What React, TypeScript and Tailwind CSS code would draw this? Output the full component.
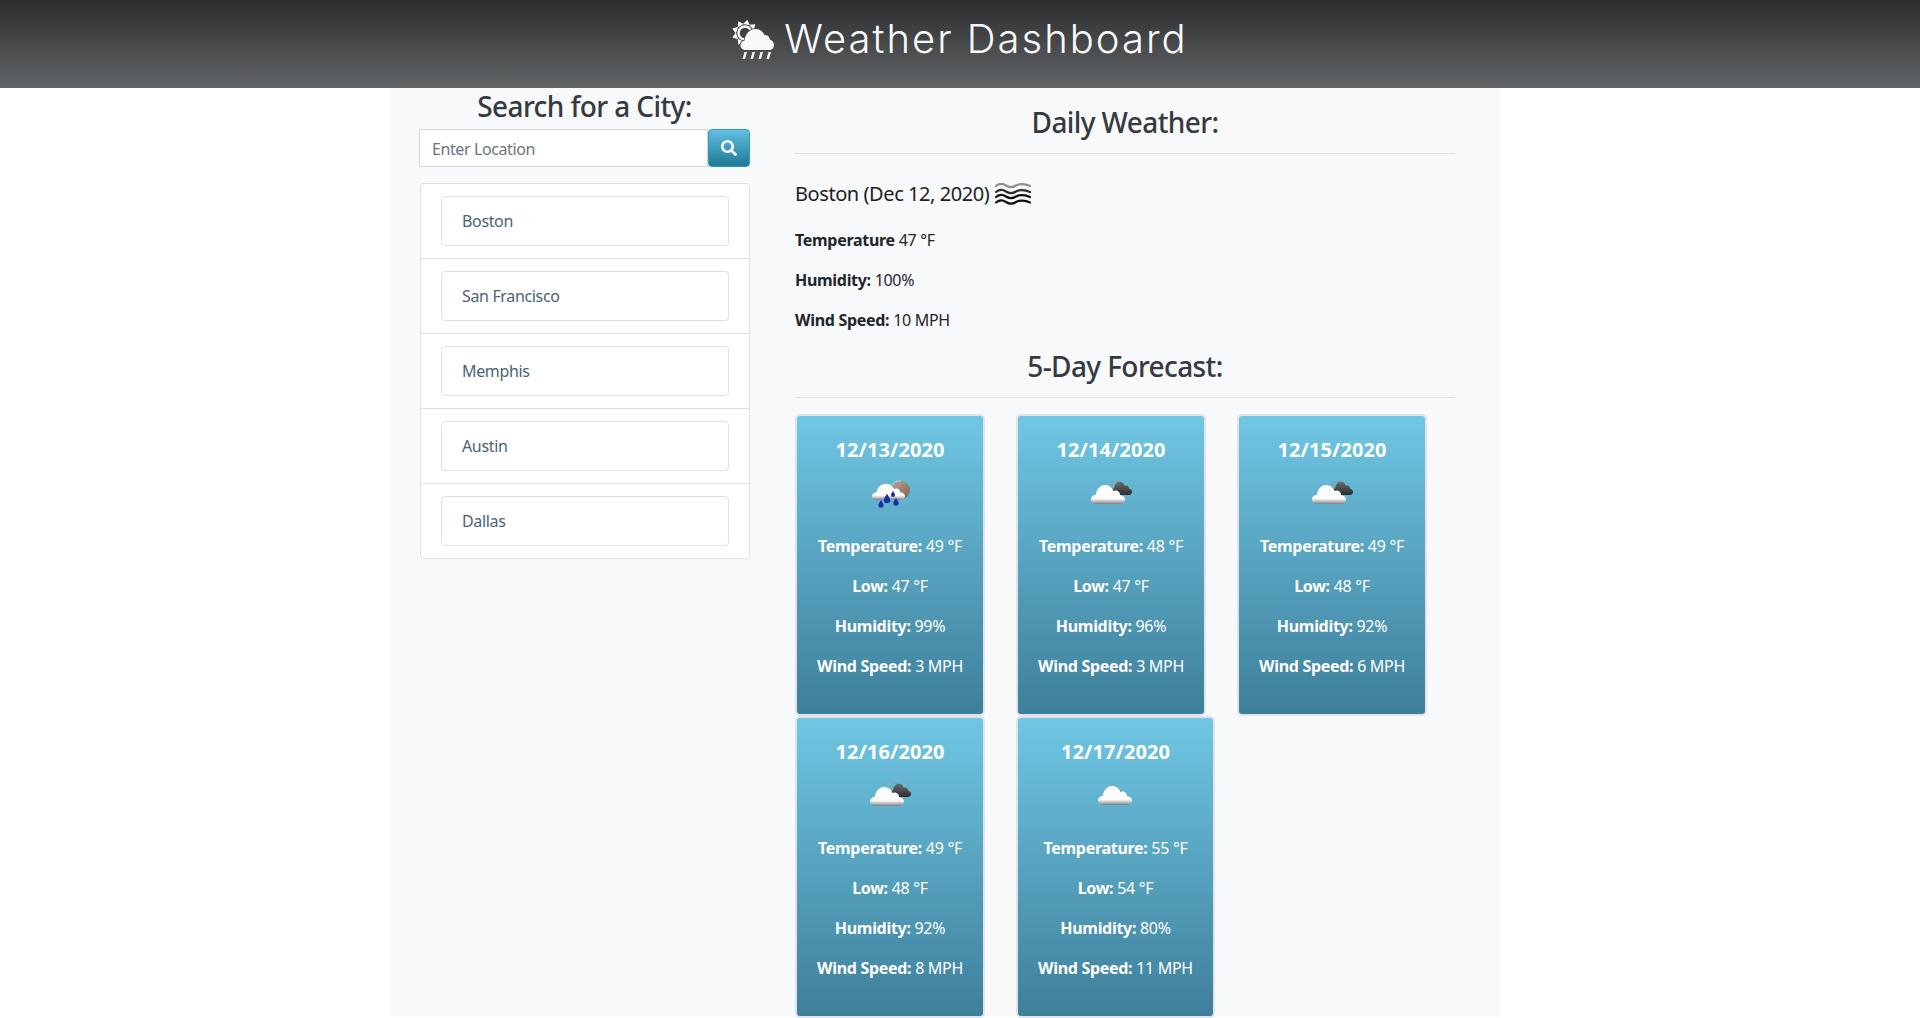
import { FaSearch } from 'react-icons/fa';

const cities = ['Boston', 'San Francisco', 'Memphis', 'Austin', 'Dallas'];

type IconKind = 'rain' | 'broken' | 'cloud';

const forecast: { date: string; icon: IconKind; temp: number; low: number; humidity: number; wind: number; width: string }[] = [
  { date: '12/13/2020', icon: 'rain', temp: 49, low: 47, humidity: 99, wind: 3, width: 'w-[190px]' },
  { date: '12/14/2020', icon: 'broken', temp: 48, low: 47, humidity: 96, wind: 3, width: 'w-[190px]' },
  { date: '12/15/2020', icon: 'broken', temp: 49, low: 48, humidity: 92, wind: 6, width: 'w-[190px]' },
  { date: '12/16/2020', icon: 'broken', temp: 49, low: 48, humidity: 92, wind: 8, width: 'w-[190px]' },
  { date: '12/17/2020', icon: 'cloud', temp: 55, low: 54, humidity: 80, wind: 11, width: 'w-[199px]' }
];

const CLOUD = 'M5 20C2 20 0 18 0 15.5C0 12.8 2 11 4.8 10.8C5.6 5.5 9.2 1 14 1C18 1 21 3.2 22.6 7C24.4 6 26.6 6.2 28 8C28.8 9 29 10 29 11C31.8 11.2 34 13 34 15.5C34 18 32 20 29 20Z';

function WeatherIcon({ kind, id }: { kind: IconKind; id: string }) {
  return (
    <svg viewBox="0 0 50 50" className="block w-[50px] h-[50px] mx-auto">
      <defs>
        <linearGradient id={`w${id}`} x1="0" y1="0" x2="0" y2="1">
          <stop offset="0" stopColor="#ffffff" />
          <stop offset="0.72" stopColor="#fafafa" />
          <stop offset="0.88" stopColor="#b5b5b5" />
          <stop offset="1" stopColor="#77808a" />
        </linearGradient>
        <linearGradient id={`d${id}`} x1="0" y1="0" x2="0" y2="1">
          <stop offset="0" stopColor="#6b6b6b" />
          <stop offset="1" stopColor="#2d2d2d" />
        </linearGradient>
        <linearGradient id={`s${id}`} x1="0" y1="0" x2="1" y2="1">
          <stop offset="0" stopColor="#b9a391" />
          <stop offset="1" stopColor="#7d6450" />
        </linearGradient>
      </defs>
      {kind === 'rain' && (
        <>
          <circle cx="36" cy="19" r="9" fill={`url(#s${id})`} />
          <path d="M27 14a9 9 0 0 1 9-4" fill="none" stroke="#d9cfc5" strokeWidth="1" />
          <g transform="translate(7 12) scale(0.97 0.85)">
            <path d={CLOUD} fill={`url(#w${id})`} />
          </g>
          {[
            [16, 34, 2.6],
            [22, 29, 3.3],
            [28, 24, 2.1],
            [31, 32, 2.7]
          ].map(([x, y, r]) => (
            <path
              key={`${x}`}
              d={`M${x} ${y - r * 1.9}C${x + r * 0.5} ${y - r} ${x + r} ${y - r * 0.4} ${x + r} ${y}A${r} ${r} 0 0 1 ${x - r} ${y}C${x - r} ${y - r * 0.4} ${x - r * 0.5} ${y - r} ${x} ${y - r * 1.9}Z`}
              fill="#1c2fa8"
            />
          ))}
        </>
      )}
      {kind === 'broken' && (
        <>
          <circle cx="30" cy="15" r="5" fill="none" stroke="#8e979c" strokeWidth="1" />
          <g transform="translate(25 10) scale(0.62 0.7)">
            <path d={CLOUD} fill={`url(#d${id})`} />
          </g>
          <g transform="translate(5 13)">
            <path d={CLOUD} fill={`url(#w${id})`} />
          </g>
        </>
      )}
      {kind === 'cloud' && (
        <g transform="translate(7 12)">
          <path d={CLOUD} fill={`url(#w${id})`} />
        </g>
      )}
    </svg>
  );
}

function HeaderIcon() {
  const spikes = [-150, -110, -70, -30, 10, 50, 170];
  return (
    <svg viewBox="0 0 42 40" className="w-[42px] h-[40px] shrink-0">
      {spikes.map((a) => (
        <polygon key={a} points="-3.500,-8.500 3.500,-8.500 0,-13.500" fill="#f8f9fa" transform={`translate(13 14) rotate(${a})`} />
      ))}
      <circle cx="13" cy="14" r="6.500" fill="none" stroke="#f8f9fa" strokeWidth="2.500" />
      <path
        d="M13.500 31C10 31 8.500 28.500 8.500 26.500C8.500 24 10 22 12.500 21.500C13 16 17 10 23.500 10C28 10 31 12.500 32.500 16C35 15.500 37.500 17.500 38 20.500C40.500 21.500 42 23.500 42 26C42 29 40 31 37 31Z"
        fill="#f8f9fa"
        stroke="#44474a"
        strokeWidth="1.500"
        paintOrder="stroke"
      />
      <g fill="#f8f9fa">
        <polygon points="12.500,33 15,33 13,40 10.500,40" />
        <polygon points="20.500,33 23,33 21,40 18.500,40" />
        <polygon points="28.500,33 31,33 29,40 26.500,40" />
        <polygon points="36.500,33 39,33 37,40 34.500,40" />
      </g>
    </svg>
  );
}

function MistIcon() {
  const wave = 'M1 0C4 -2.500 8 -2.500 11 -0.500C14 1.500 18 1.500 21 -0.500C24 -2.500 30 -2.500 35 0';
  return (
    <svg viewBox="0 0 36 22" className="w-[36px] h-[22px]">
      <g fill="none" strokeWidth="2.200" strokeLinecap="round">
        <path d={wave} transform="translate(0 3)" stroke="#8f8f8f" />
        <path d={wave} transform="translate(0 9)" stroke="#2e2e2e" />
        <path d={wave} transform="translate(0 14)" stroke="#111111" />
        <path d={wave} transform="translate(0 19.500)" stroke="#111111" />
      </g>
    </svg>
  );
}

export default function App() {
  return (
    <div className="min-h-[1018px] bg-white font-['Noto_Sans',sans-serif] text-[#212529]">
      <header className="h-[88px] pb-[10px] flex items-center justify-center gap-[10px] bg-gradient-to-b from-[#2c2d2f] to-[#636668] text-[#f8f9fa]">
        <HeaderIcon />
        <h1 className="font-['Inter',sans-serif] font-light text-[40px] leading-[48px] tracking-[2px]">Weather Dashboard</h1>
      </header>

      <main className="ml-[390px] w-[1110px] h-[929px] bg-[#f8f9fa] flex pl-[29px]">
        <aside className="w-[331px] shrink-0">
          <h3 className="mt-[1px] text-[28px] leading-[34px] font-medium text-center text-[#343a40] tracking-[-0.6px]">Search for a City:</h3>
          <div className="mt-[6px] flex h-[38px]">
            <input
              placeholder="Enter Location"
              className="flex-1 min-w-0 border border-[#ced4da] bg-white px-3 pt-[2px] text-[16px] tracking-[-0.4px] placeholder:text-[#6c757d] outline-none"
            />
            <button type="button" className="w-[42px] flex items-center justify-center rounded-[4px] border border-[#2c9cb8] bg-gradient-to-b from-[#62bfe0] to-[#1c7a96] text-[#f8f9fa]">
              <FaSearch size={16} />
            </button>
          </div>
          <ul className="mt-[16px] ml-[1px] rounded-[4px] border border-[#dfe1e3] bg-white">
            {cities.map((city, i) => (
              <li key={city} className={`px-[20px] py-[12px] ${i > 0 ? 'border-t border-[#dfe1e3]' : ''}`}>
                <div className="h-[50px] flex items-center px-[20px] rounded-[4px] border border-[#dfe1e3] text-[16px] tracking-[-0.35px] text-[#4a6470]">
                  {city}
                </div>
              </li>
            ))}
          </ul>
        </aside>

        <section className="ml-[45px] w-[660px] shrink-0">
          <h3 className="mt-[17px] text-[28px] leading-[34px] font-medium text-center text-[#343a40] tracking-[-0.6px]">Daily Weather:</h3>
          <hr className="mt-[14px] border-t border-[#dfe1e3]" />
          <div className="mt-[26px] flex items-center gap-[6px] h-[28px] text-[20px] tracking-[-0.43px] text-[#1b1e21]">
            Boston (Dec 12, 2020) <MistIcon />
          </div>
          <div className="mt-[20px] flex flex-col gap-[16px] text-[16px] leading-[24px] tracking-[-0.3px]">
            <p><strong className="font-bold">Temperature</strong> 47 °F</p>
            <p><strong className="font-bold">Humidity:</strong> 100%</p>
            <p><strong className="font-bold">Wind Speed:</strong> 10 MPH</p>
          </div>
          <h3 className="mt-[17px] text-[28px] leading-[34px] font-medium text-center text-[#343a40] tracking-[-0.6px]">5-Day Forecast:</h3>
          <hr className="mt-[14px] border-t border-[#dfe1e3]" />
          <div className="mt-[16px] flex flex-wrap gap-x-[31px]">
            {forecast.map((day) => (
              <article
                key={day.date}
                className={`${day.width} h-[302px] rounded-[5px] border-2 border-[#e1e3e6] bg-gradient-to-b from-[#70c7e4] to-[#3e7f9b] px-[6px] pt-[22px] text-center text-white`}
              >
                <h5 className="text-[20px] leading-[24px] font-bold tracking-[0.1px]">{day.date}</h5>
                <div className="mt-[9px] mb-[13px]">
                  <WeatherIcon kind={day.icon} id={day.date.slice(3, 5)} />
                </div>
                <div className="flex flex-col gap-[16px] text-[16px] leading-[24px] tracking-[-0.3px]">
                  <p><strong className="font-bold">Temperature:</strong> {day.temp} °F</p>
                  <p><strong className="font-bold">Low:</strong> {day.low} °F</p>
                  <p><strong className="font-bold">Humidity:</strong> {day.humidity}%</p>
                  <p><strong className="font-bold">Wind Speed:</strong> {day.wind} MPH</p>
                </div>
              </article>
            ))}
          </div>
        </section>
      </main>
    </div>
  );
}
